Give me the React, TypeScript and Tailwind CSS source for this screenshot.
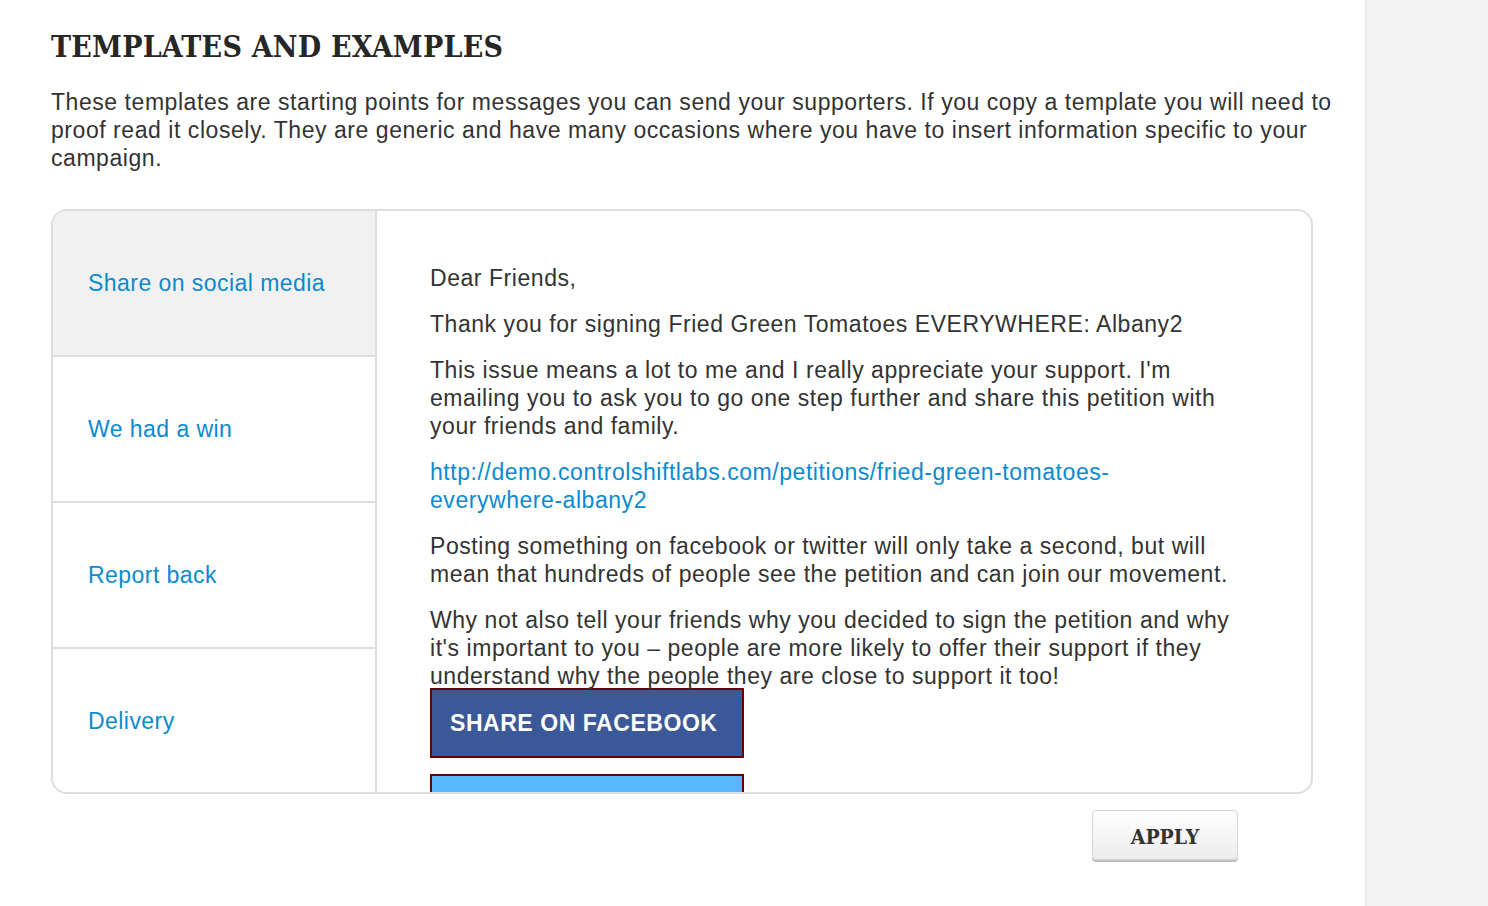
import React, { useState } from 'react';

const tabs = ['Share on social media', 'We had a win', 'Report back', 'Delivery'];

const slab = { fontFamily: '"DejaVu Serif Condensed", "DejaVu Serif", serif' };

const App: React.FC = () => {
  const [active, setActive] = useState(0);

  return (
    <div className="flex h-[906px] w-full overflow-hidden bg-white text-[#333]" style={{ fontFamily: '"Liberation Sans", Arial, sans-serif' }}>
      {/* main column */}
      <div className="w-[1365px] shrink-0 pl-[51px]">
        <h1 className="mt-[27px] text-[30px] leading-[40px] font-bold tracking-[0.2px] text-[#272727]" style={slab}>
          TEMPLATES AND EXAMPLES
        </h1>
        <p className="mt-[21px] w-[1290px] text-[23px] leading-[28px] tracking-[0.55px]">
          These templates are starting points for messages you can send your supporters. If you copy a template you will need to proof read it closely. They are generic and have many occasions where you have to insert information specific to your campaign.
        </p>

        <div className="mt-[37px] flex h-[585px] w-[1262px] overflow-hidden rounded-[16px] border-2 border-[#dedede]">
          <div className="flex w-[324px] shrink-0 flex-col border-r-2 border-[#dedede]">
            {tabs.map((t, i) => (
              <button
                key={t}
                onClick={() => setActive(i)}
                className={`flex shrink-0 items-center pl-[35px] text-left text-[23px] tracking-[0.45px] text-[#0a8ad0] ${i > 0 ? 'h-[146px] border-t-2 border-[#dedede]' : 'h-[144px]'} ${active === i ? 'bg-[#f1f1f1]' : 'bg-white'}`}
              >
                {t}
              </button>
            ))}
          </div>

          <div className="flex-1 overflow-hidden pl-[53px] pt-[53px]">
            <div className="w-[810px] text-[23px] leading-[28px] tracking-[0.55px]">
              <p className="mb-[18px]">Dear Friends,</p>
              <p className="mb-[18px]">Thank you for signing Fried Green Tomatoes EVERYWHERE: Albany2</p>
              <p className="mb-[18px]">This issue means a lot to me and I really appreciate your support. I'm emailing you to ask you to go one step further and share this petition with your friends and family.</p>
              <p className="mb-[18px]">
                <a href="#" className="text-[#0a8ad0]">http://demo.controlshiftlabs.com/petitions/fried-green-tomatoes-everywhere-albany2</a>
              </p>
              <p className="mb-[18px]">Posting something on facebook or twitter will only take a second, but will mean that hundreds of people see the petition and can join our movement.</p>
              <p>Why not also tell your friends why you decided to sign the petition and why it's important to you – people are more likely to offer their support if they understand why the people they are close to support it too!</p>
              <button className="-mt-[2px] block h-[70px] w-[314px] border-2 border-[#6b0000] bg-[#3b5998] pl-[18px] text-left text-[23px] font-bold tracking-[0.55px] text-white">
                SHARE ON FACEBOOK
              </button>
              <button className="mt-[16px] block h-[70px] w-[314px] border-2 border-[#6b0000] bg-[#55b9fb] pl-[18px] text-left text-[23px] font-bold tracking-[0.55px] text-white">
                SHARE ON TWITTER
              </button>
            </div>
          </div>
        </div>

        <div className="mt-[16px] flex w-[1262px] justify-end pr-[75px]">
          <button
            className="h-[50px] w-[146px] rounded-[4px] border border-[#d6d6d6] bg-gradient-to-b from-white to-[#ececec] pt-[4px] text-[21px] font-bold text-[#333] shadow-[0_2px_0_#bdbdbd]"
            style={slab}
          >
            APPLY
          </button>
        </div>
      </div>

      {/* right rail */}
      <div className="flex-1 border-l-2 border-[#ebebeb] bg-[#f4f4f4]" />
    </div>
  );
};

export default App;
